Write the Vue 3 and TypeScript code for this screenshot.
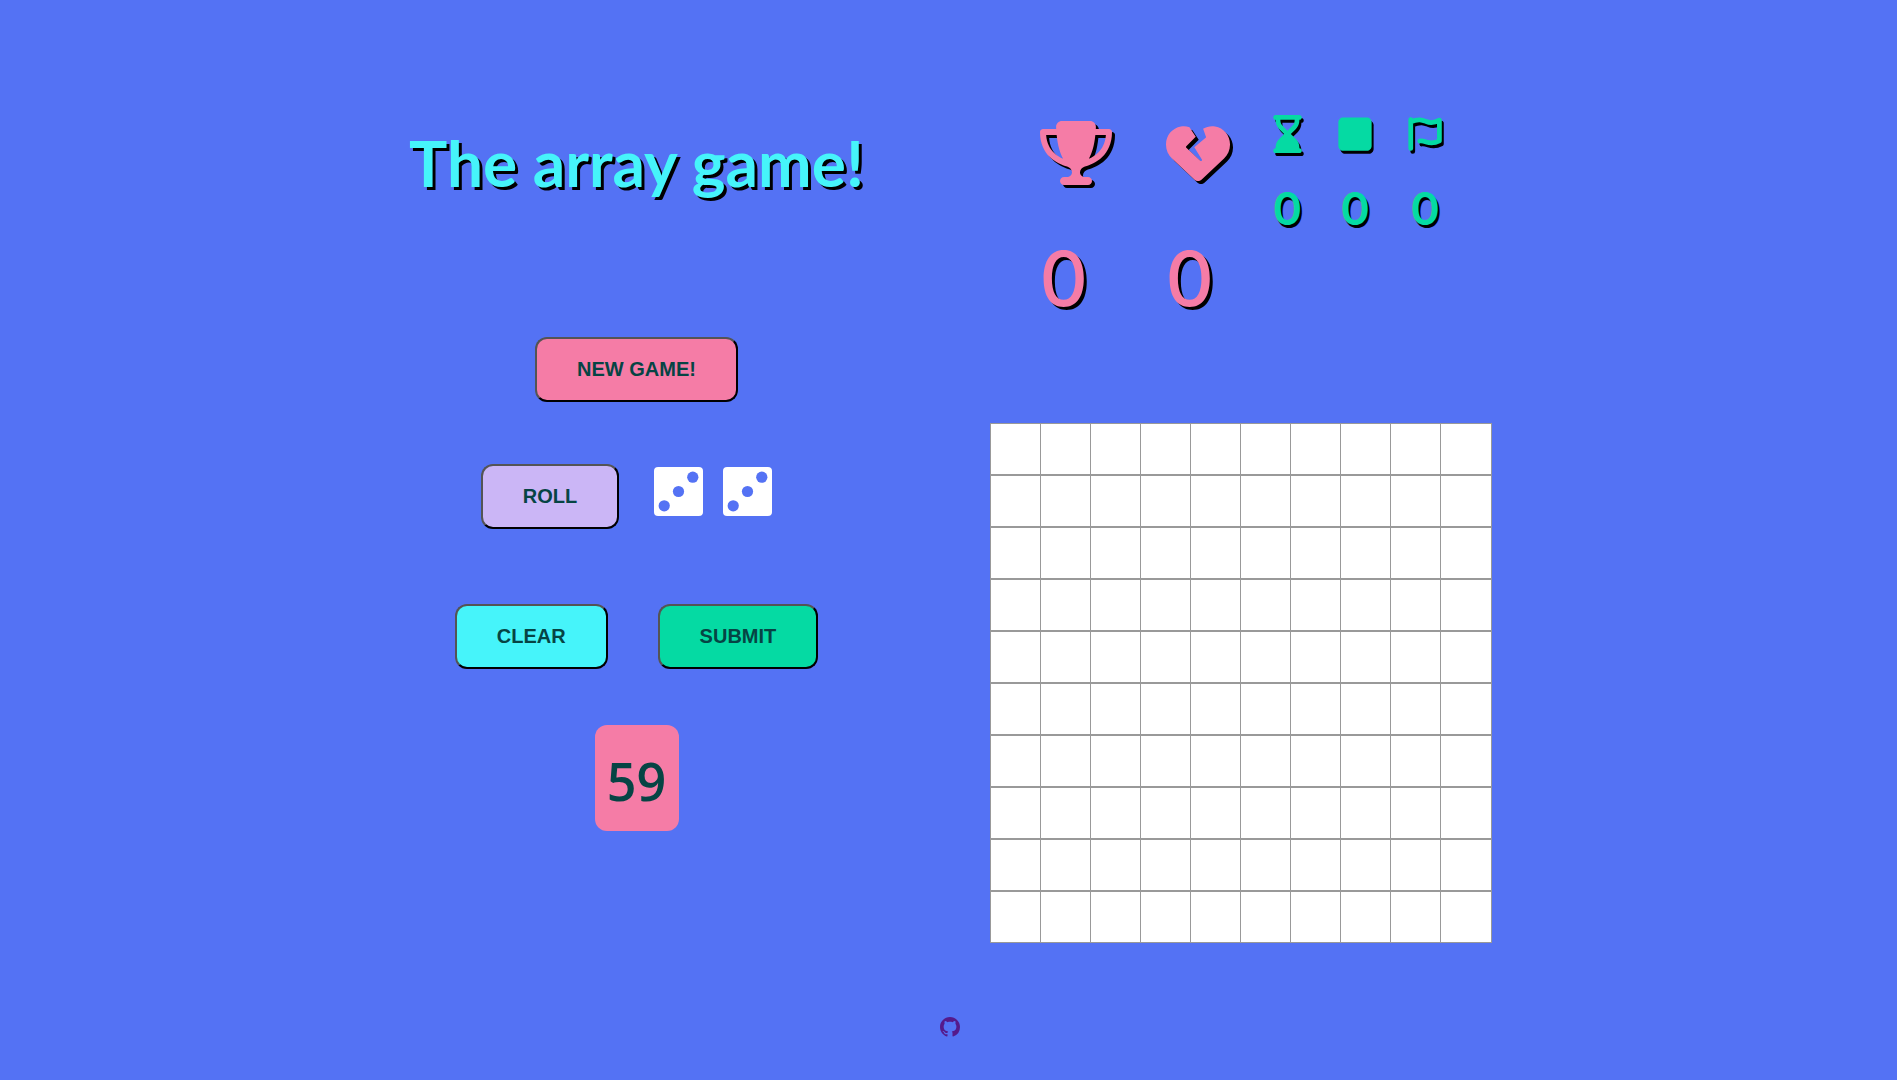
<script setup lang="ts">
import { ref } from 'vue'

interface Icon {
  box: string
  width: number
  height: number
  path: string
  stroke?: number
}

const trophy: Icon = {
  box: '0 0 576 512',
  width: 72,
  height: 64,
  path: 'M400 0L176 0c-26.5 0-48.1 21.8-47.1 48.2c.2 5.3 .4 10.6 .7 15.8L24 64C10.7 64 0 74.7 0 88c0 92.6 33.5 157 78.5 200.7c44.3 43.1 98.3 64.8 138.1 75.8c23.4 6.5 39.4 26 39.4 45.6c0 20.9-17 37.9-37.9 37.9L192 448c-17.7 0-32 14.3-32 32s14.3 32 32 32l192 0c17.7 0 32-14.3 32-32s-14.3-32-32-32l-26.1 0C337 448 320 431 320 410.1c0-19.6 15.9-39.2 39.4-45.6c39.9-11 93.9-32.7 138.2-75.8C542.5 245 576 180.6 576 88c0-13.3-10.7-24-24-24L446.4 64c.3-5.2 .5-10.4 .7-15.8C448.1 21.8 426.5 0 400 0zM48.9 112l84.4 0c9.1 90.1 29.2 150.3 51.9 190.6c-24.9-11-50.8-26.5-73.2-48.3c-32-31.1-58-76-63-142.3zM464.1 254.3c-22.4 21.8-48.3 37.3-73.2 48.3c22.7-40.3 42.8-100.5 51.9-190.6l84.4 0c-5.1 66.3-31.1 111.2-63 142.3z',
}
const heart: Icon = {
  box: '0 0 512 512',
  width: 64,
  height: 64,
  path: 'M119.4 44.1c23.3-3.9 46.8-1.9 68.6 5.3l49.8 77.5-75.4 75.4c-1.5 1.5-2.4 3.6-2.3 5.8s1 4.2 2.6 5.7l112 104c2.9 2.7 7.4 2.9 10.5 .3s3.8-7 1.7-10.4l-60.4-98.1 90.7-75.6c2.6-2.1 3.5-5.7 2.4-8.8L296.8 61.8c28.5-16.7 62.4-23.2 95.7-17.6C461.5 55.6 512 115.2 512 185.1v5.8c0 41.5-17.2 81.2-47.6 109.5L283.7 469.1c-7.5 7-17.4 10.9-27.7 10.9s-20.2-3.9-27.7-10.9L47.6 300.4C17.2 272.1 0 232.4 0 190.9v-5.8c0-69.9 50.5-129.5 119.4-141z',
}
const hourglass: Icon = {
  box: '0 0 384 512',
  width: 29,
  height: 38,
  path: 'M32 0C14.3 0 0 14.3 0 32S14.3 64 32 64l0 11c0 42.4 16.9 83.1 46.9 113.1L146.7 256 78.9 323.9C48.9 353.9 32 394.6 32 437l0 11c-17.7 0-32 14.3-32 32s14.3 32 32 32l32 0 256 0 32 0c17.7 0 32-14.3 32-32s-14.3-32-32-32l0-11c0-42.4-16.9-83.1-46.9-113.1L237.3 256l67.9-67.9c30-30 46.9-70.7 46.9-113.1l0-11c17.7 0 32-14.3 32-32s-14.3-32-32-32L320 0 64 0 32 0zM96 75l0-11 192 0 0 11c0 25.5-10.1 49.9-28.1 67.9L192 210.7l-67.9-67.9C106.1 124.9 96 100.5 96 75z',
}
const square: Icon = {
  box: '0 0 448 512',
  width: 34,
  height: 38,
  path: 'M64 32H384c35.3 0 64 28.7 64 64V416c0 35.3-28.7 64-64 64H64c-35.3 0-64-28.7-64-64V96C0 60.7 28.7 32 64 32z',
}
const flag: Icon = {
  box: '0 0 448 512',
  width: 34,
  height: 38,
  path: 'M32 62V450M32 92C140 45 190 68 240 88S350 108 418 70V350C350 385 280 378 240 364S180 345 154 350',
  stroke: 64,
}

const totals = ref([
  { label: 'Wins', icon: trophy, value: 0 },
  { label: 'Losses', icon: heart, value: 0 },
])
const details = ref([
  { label: 'Turns', icon: hourglass, value: 0 },
  { label: 'Squares', icon: square, value: 0 },
  { label: 'Flags', icon: flag, value: 0 },
])
const dice = ref([3, 3])
const target = ref(59)
const size = 10
const selected = ref<Set<number>>(new Set())

function roll() {
  dice.value = dice.value.map(() => 1 + Math.floor(Math.random() * 6))
}
function clearBoard() {
  selected.value = new Set()
}
function toggle(cell: number) {
  const next = new Set(selected.value)
  if (!next.delete(cell)) next.add(cell)
  selected.value = next
}

const pips: Record<number, number[][]> = {
  1: [[24, 24]],
  2: [[38, 10], [10, 38]],
  3: [[38, 10], [24, 24], [10, 38]],
  4: [[10, 10], [38, 10], [10, 38], [38, 38]],
  5: [[10, 10], [38, 10], [24, 24], [10, 38], [38, 38]],
  6: [[10, 10], [38, 10], [10, 24], [38, 24], [10, 38], [38, 38]],
}
</script>

<template>
  <div class="page">
    <main class="game">
      <section class="controls">
        <h1 class="title">The array game!</h1>
        <button type="button" class="btn pink" @click="clearBoard">NEW GAME!</button>
        <div class="row roll-row">
          <button type="button" class="btn lilac" @click="roll">ROLL</button>
          <div class="dice">
            <svg v-for="(die, i) in dice" :key="i" class="die" viewBox="0 0 48 48" role="img" :aria-label="`Die ${die}`">
              <rect width="48" height="48" rx="4" />
              <circle v-for="(pip, p) in pips[die]" :key="p" :cx="pip[0]" :cy="pip[1]" r="5.5" />
            </svg>
          </div>
        </div>
        <div class="row submit-row">
          <button type="button" class="btn cyan" @click="clearBoard">CLEAR</button>
          <button type="button" class="btn green">SUBMIT</button>
        </div>
        <output class="target">{{ target }}</output>
      </section>

      <section class="play">
        <div class="scores">
          <div v-for="item in totals" :key="item.label" class="score total">
            <svg class="icon" :viewBox="item.icon.box" :width="item.icon.width" :height="item.icon.height" role="img" :aria-label="item.label">
              <path :d="item.icon.path" />
            </svg>
            <span class="value">{{ item.value }}</span>
          </div>
          <div class="details">
            <div v-for="item in details" :key="item.label" class="score detail">
              <svg class="icon" :viewBox="item.icon.box" :width="item.icon.width" :height="item.icon.height" role="img" :aria-label="item.label">
                <path :d="item.icon.path" :class="{ outline: item.icon.stroke }" :stroke-width="item.icon.stroke" />
              </svg>
              <span class="value">{{ item.value }}</span>
            </div>
          </div>
        </div>
        <div class="board">
          <div v-for="r in size" :key="r" class="line">
            <button
              v-for="c in size"
              :key="c"
              type="button"
              class="cell"
              :class="{ filled: selected.has(r * size + c) }"
              :aria-label="`Row ${r}, column ${c}`"
              @click="toggle(r * size + c)"
            ></button>
          </div>
        </div>
      </section>
    </main>

    <footer class="footer">
      <a href="https://github.com" aria-label="GitHub">
        <svg viewBox="0 0 16 16" width="20" height="20">
          <path d="M8 0C3.58 0 0 3.58 0 8c0 3.54 2.29 6.53 5.47 7.59.4.07.55-.17.55-.38 0-.19-.01-.82-.01-1.49-2.01.37-2.53-.49-2.69-.94-.09-.23-.48-.94-.82-1.13-.28-.15-.68-.52-.01-.53.63-.01 1.08.58 1.23.82.72 1.21 1.87.87 2.33.66.07-.52.28-.87.51-1.07-1.78-.2-3.64-.89-3.64-3.95 0-.87.31-1.59.82-2.15-.08-.2-.36-1.02.08-2.12 0 0 .67-.21 2.2.82.64-.18 1.32-.27 2-.27s1.36.09 2 .27c1.53-1.04 2.2-.82 2.2-.82.44 1.1.16 1.92.08 2.12.51.56.82 1.27.82 2.15 0 3.07-1.87 3.75-3.65 3.95.29.25.54.73.54 1.48 0 1.07-.01 1.93-.01 2.2 0 .21.15.46.55.38A8.01 8.01 0 0 0 16 8c0-4.42-3.58-8-8-8z" />
        </svg>
      </a>
    </footer>
  </div>
</template>

<style>
body {
  margin: 0;
  background: #5472f4;
}
</style>

<style scoped>
.page {
  box-sizing: border-box;
  min-height: 100vh;
  padding: 111px 24px 43px 26px;
  display: flex;
  flex-direction: column;
  justify-content: space-between;
  background: #5472f4;
  color: #064444;
  font-family: Inter, sans-serif;
}
.game {
  display: flex;
  flex-wrap: wrap;
  justify-content: center;
  gap: 40px 124px;
}
.controls {
  flex: 0 0 458px;
  display: flex;
  flex-direction: column;
  align-items: center;
}
.title {
  margin: 8px 0 130px;
  color: #46f4fa;
  font-family: Lato, sans-serif;
  font-size: 64px;
  font-weight: 700;
  line-height: 88px;
  text-shadow: 3px 3px #000;
  white-space: nowrap;
}
.btn {
  padding: 19px 40px;
  border: 2px outset #000;
  border-radius: 12px;
  color: #064444;
  font: bold 20px "Liberation Sans", Arial, sans-serif;
}
.pink { background: #f57ca6; }
.lilac { background: #cbb6f6; }
.cyan { background: #46f4fa; }
.green { background: #05daa3; }
.row {
  display: flex;
}
.roll-row {
  margin-top: 62px;
  gap: 35px;
}
.submit-row {
  margin-top: 75px;
  gap: 50px;
}
.dice {
  display: flex;
  gap: 20px;
  padding: 3px 20px 0 0;
}
.die {
  width: 49px;
  height: 49px;
  fill: #fff;
}
.die circle {
  fill: #5472f4;
}
.target {
  margin-top: 56px;
  padding-top: 6px;
  width: 84px;
  border-radius: 12px;
  background: #f57ca6;
  font-family: "Open Sans", sans-serif;
  font-size: 52px;
  font-weight: 600;
  line-height: 100px;
  text-align: center;
}
.scores {
  display: flex;
  align-items: flex-start;
  margin-left: 50px;
  height: 312px;
}
.score {
  display: flex;
  flex-direction: column;
}
.icon {
  display: block;
  fill: currentColor;
  overflow: visible;
}
.outline {
  fill: none;
  stroke: currentColor;
  stroke-linecap: round;
  stroke-linejoin: round;
}
.total {
  margin-right: 54px;
  padding-top: 10px;
  color: #f57ca6;
}
.total + .details {
  margin-left: -11px;
}
.total .icon {
  filter: drop-shadow(3px 3px #000);
}
.total .value {
  margin-top: 42px;
  font-size: 75px;
  font-weight: 500;
  line-height: 104px;
  text-shadow: 3px 3px #000;
}
.details {
  display: flex;
  gap: 36px;
  padding-top: 4px;
}
.detail {
  align-items: center;
  color: #05daa3;
}
.detail .icon {
  filter: drop-shadow(2px 3px #000);
}
.detail .value {
  margin-top: 24px;
  font-size: 45px;
  font-weight: 600;
  line-height: 64px;
  text-shadow: 2px 3px #000;
}
.line {
  display: flex;
  padding-right: 2px;
}
.cell {
  width: 52px;
  height: 52px;
  margin: 0 -2px 0 0;
  padding: 0;
  border: 1px solid #999;
  background: #fff;
}
.cell.filled {
  background: #cbb6f6;
}
.footer {
  display: flex;
  justify-content: center;
}
.footer a {
  display: block;
  color: #551a8b;
}
.footer svg {
  display: block;
  fill: currentColor;
}
</style>
